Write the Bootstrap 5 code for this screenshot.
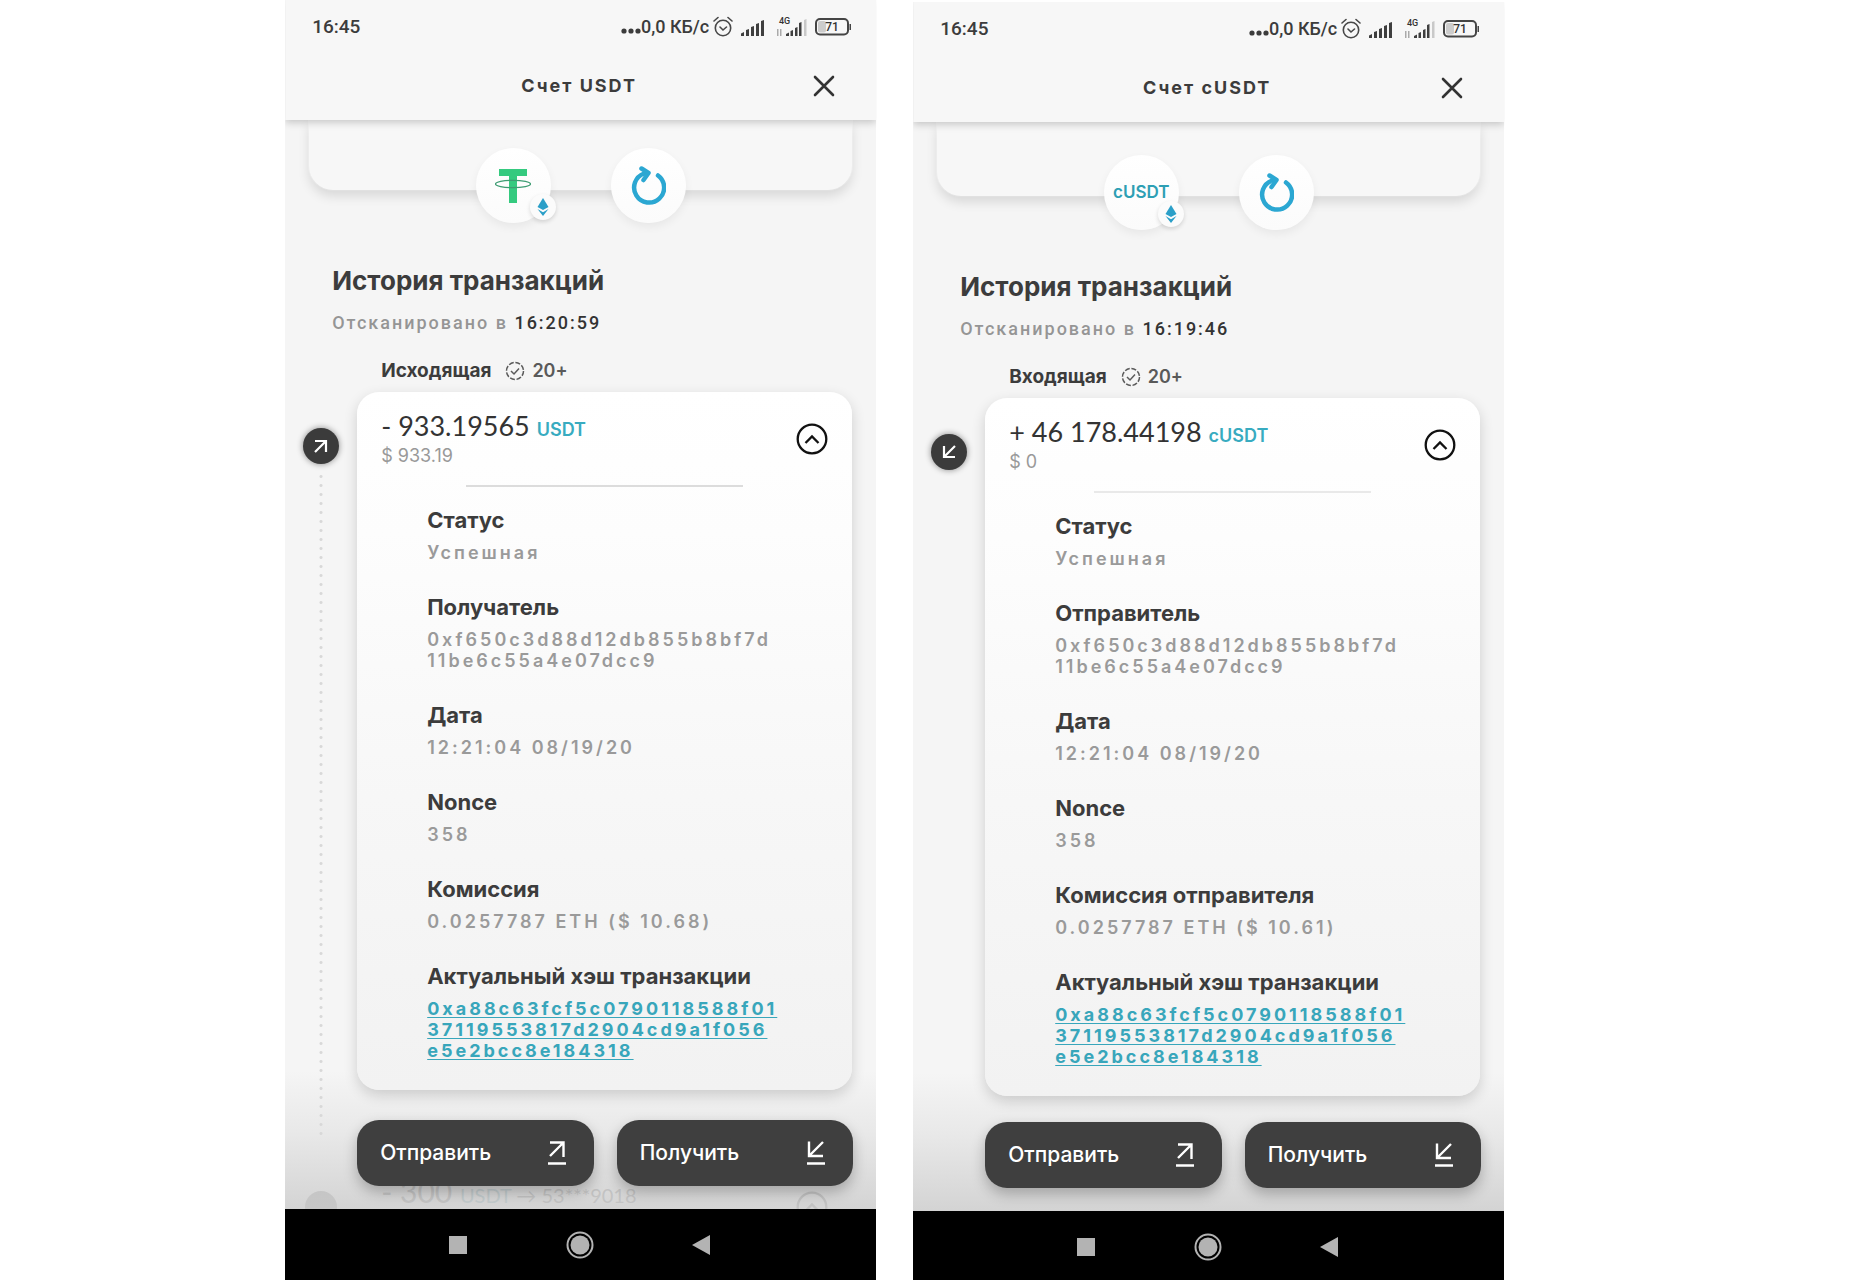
<!DOCTYPE html>
<html lang="ru">
<head>
<meta charset="utf-8">
<meta name="viewport" content="width=device-width, initial-scale=1">
<title>История транзакций</title>
<link href="https://cdn.jsdelivr.net/npm/bootstrap@5.3.0/dist/css/bootstrap.min.css" rel="stylesheet">
<style>
  body { font-family: Inter, "Noto Sans", sans-serif; color: #3c3c3c; background: #fff; }
  button { font-family: inherit; color: inherit; }
  .screens { padding: 0 19.3% 0 15.3%; gap: 37px; height: 100vh; overflow: hidden; }
  .phone { background: #f5f5f5; flex: 1 1 0; min-width: 0; height: 100vh; }
  .phone-lower { margin-top: 2px; }

  .topbar { background: #f7f7f7; box-shadow: 0 2px 8px rgba(0,0,0,.22); position: relative; z-index: 3; clip-path: inset(0 0 -14px 0); }
  .status-line { height: 54px; padding: 0 24px 0 27px; font: 500 19px/22px Roboto, sans-serif; }
  .status-line .speed { font-size: 18px; }
  .title-line { height: 66px; padding: 0 41px 2px 40px; }
  .title-line h1 { font-size: 18px; line-height: 24px; font-weight: 700; letter-spacing: 2px; }
  .plain-btn { background: none; border: 0; padding: 0; line-height: 0; }

  .content-area { position: relative; overflow: hidden; min-height: 0; }
  .account-stub { margin: 0 24px; height: 70px; padding-top: 28px; gap: 60px; border-radius: 0 0 24px 24px;
    background: #f7f7f7; box-shadow: 0 6px 12px rgba(0,0,0,.12), 0 0 0 1px #fafafa; }
  .phone-lower .account-stub { height: 74px; padding-top: 33px; }
  .round-btn { width: 75px; height: 75px; border-radius: 50%; border: 0; padding: 0; position: relative;
    background: linear-gradient(#fff, #fbfbfb); box-shadow: 0 4px 10px rgba(0,0,0,.06); }
  .round-btn .ticker { font-size: 17px; font-weight: 600; color: #2e9fb4; }
  .chain-dot { position: absolute; right: -5px; bottom: 3px; width: 26px; height: 26px; border-radius: 50%;
    background: #fbfbfb; box-shadow: 0 2px 4px rgba(0,0,0,.14); }

  .history-head { margin: 76px 24px 0 47px; }
  .history-head h2 { font-size: 26px; line-height: 30px; font-weight: 700; margin: 0 0 16px; }
  .scan-time { font: 500 18px/22px Roboto, sans-serif; letter-spacing: 2px; color: #959595; margin: 0; }
  .scan-time time { color: #333; }
  .kind-line { margin: 25px 24px 9px 96px; height: 24px; font-size: 19px; line-height: 24px; gap: 14px; }
  .kind-line .checks { gap: 7px; font-size: 18px; font-weight: 600; color: #5a5a5a; }

  .entry { padding-right: 24px; position: relative; z-index: 2; }
  .rail { width: 72px; flex: none; padding-top: 36px; position: relative; z-index: -1; }
  .rail-dot { width: 36px; height: 36px; border-radius: 50%; background: #3b3b3b; box-shadow: 0 0 6px rgba(0,0,0,.45); }
  .rail-line { width: 4px; margin-top: 8px; margin-bottom: -50px;
    background: radial-gradient(circle, #d8d8d8 1px, transparent 2px) 0 0 / 4px 9px repeat-y; }
  .tx-card { min-width: 0; border-radius: 22px; padding: 18px 24px 29px 24px;
    background: linear-gradient(#fff 0, #fdfdfd 20%, #f7f7f7 58%, #f2f2f2 100%);
    box-shadow: 0 5px 14px rgba(0,0,0,.16); }
  .sum { font: 400 27px/32px Lato, Inter, sans-serif; color: #333; margin-bottom: 3px; }
  .sum .unit { font: 600 18px/22px Inter, sans-serif; color: #38abc0; }
  .fiat { font-size: 18px; line-height: 22px; color: #999; }
  .split { width: 62%; height: 2px; margin: 18px auto 21px; background: #dcdcdc; border: 0; opacity: 1; }
  .phone-lower .split { background: #e9e9e9; }
  .facts { margin: 0; padding: 0 45px 0 46px; }
  .facts dt { font-size: 22px; line-height: 24px; font-weight: 700; margin-bottom: 10px; white-space: nowrap; }
  .facts dd { font-size: 18px; line-height: 21px; font-weight: 600; letter-spacing: 3px; color: #9a9a9a; margin: 0 0 32px; white-space: nowrap; }
  .facts dd:last-child { margin-bottom: 0; }
  .facts a { color: #38a6bb; font-weight: 700; text-decoration-thickness: 1px; text-underline-offset: 2px; }

  .next-entry { margin: 85px 24px 0 20px; color: #8d8d8d; }
  .next-entry .half-dot { width: 32px; height: 32px; border-radius: 50%; background: #9d9d9d; margin-right: 44px; }
  .next-entry .amount { font: 400 30px/32px Lato, Inter, sans-serif; }
  .next-entry .tail { font-size: 20px; }
  .next-entry .unit { color: #86b3bc; }

  .dock { position: absolute; left: 0; right: 0; bottom: 0; padding: 49px 23px 23px 72px; gap: 23px; z-index: 2; }
  .dock-shade { position: absolute; left: 0; right: 0; bottom: 0; height: 138px; z-index: 1;
    background: linear-gradient(rgba(236,236,236,0), rgba(222,222,222,.55) 45%, rgba(206,206,206,.86)); }
  .dock-btn { flex: 1 1 0; height: 66px; border: 0; border-radius: 22px; background: #3f3f3f; color: #fff; padding: 0 27px 0 23px;
    font-size: 21px; font-weight: 500; box-shadow: 0 6px 14px rgba(0,0,0,.25); }

  .navkeys { background: #000; height: 71px; padding: 0 165px 0 163px; flex: none; }
</style>
</head>
<body>
<svg width="0" height="0" class="position-absolute" aria-hidden="true">
  <symbol id="i-clock" viewBox="0 0 20 22"><g fill="none" stroke="#484848" stroke-width="1.6" stroke-linecap="round"><circle cx="10" cy="12" r="7.7"/><path d="M7 11l3 3 3.500-3M1 5l4-3.500M19 5l-4-3.500"/></g></symbol>
  <symbol id="i-signal" viewBox="0 0 23 17"><path fill="#3f3f3f" d="M0 17v-2.500L3 13v4zM5 17v-6l3-1v7zM10 17V8l3-1v10zM15 17V5l3-1v13zM20 17V2l3-1v16z"/></symbol>
  <symbol id="i-close" viewBox="0 0 22 22"><path d="M2 2l18 18M20 2L2 20" stroke="#333" stroke-width="2.600" stroke-linecap="round"/></symbol>
  <symbol id="i-tether" viewBox="0 0 38 34"><path fill="#35ca7f" d="M5 0h28v7H23v27h-8V7H5z"/><ellipse cx="19" cy="15" rx="17.500" ry="3.700" fill="none" stroke="#3d9c72" stroke-width="1.300"/></symbol>
  <symbol id="i-reload" viewBox="0 0 36 40"><g fill="none" stroke="#2ba7d2" stroke-width="4.500" stroke-linecap="round" stroke-linejoin="round"><path d="M28 9.500a15 15 0 1 1-14-2"/><path d="M11.500 2.500l7 4.500-5 7"/></g></symbol>
  <symbol id="i-eth" viewBox="0 0 12 18"><path fill="#2a9fc8" d="M6 0l5.500 9L6 12 .5 9z"/><path fill="#2a9fc8" d="M.5 11L6 14.200 11.500 11 6 18z"/></symbol>
  <symbol id="i-checks" viewBox="0 0 20 20"><g fill="none" stroke="#5b5b5b" stroke-width="1.500"><circle cx="10" cy="10" r="8.500" stroke-dasharray="5 1.700"/><path d="M6 10l3 3 5-5.500"/></g></symbol>
  <symbol id="i-up" viewBox="0 0 32 32"><g fill="none" stroke="#111" stroke-width="2.300"><circle cx="16" cy="16" r="14.300"/><path d="M9.500 20l6.500-6.500 6.500 6.500"/></g></symbol>
  <symbol id="i-out" viewBox="0 0 16 16"><path d="M2 3h11v11M12.500 3.500L2 14" fill="none" stroke="#fff" stroke-width="2.200"/></symbol>
  <symbol id="i-in" viewBox="0 0 16 16"><path d="M14 13H3V2M3.500 12.500L14 2" fill="none" stroke="#fff" stroke-width="2.200"/></symbol>
  <symbol id="i-send" viewBox="0 0 20 26"><path d="M3 2.500h13.500V17M16 3L3 16M1 23.500h18" fill="none" stroke="#fff" stroke-width="2.400"/></symbol>
  <symbol id="i-receive" viewBox="0 0 20 26"><path d="M17 16H3V1.500M3.500 15.500L17 2M1 23.500h18" fill="none" stroke="#fff" stroke-width="2.400"/></symbol>
</svg>

<div class="screens d-flex">

  <section class="phone d-flex flex-column">
    <header class="topbar">
      <div class="status-line d-flex align-items-center justify-content-between">
        <span>16:45</span>
        <span class="d-flex align-items-center">
          <svg width="20" height="6" viewBox="0 0 20 6" class="mt-2" aria-hidden="true"><g fill="#3c3c3c"><circle cx="3" cy="3" r="2.600"/><circle cx="10" cy="3" r="2.600"/><circle cx="17" cy="3" r="2.600"/></g></svg>
          <span class="speed me-1">0,0 КБ/с</span>
          <svg width="20" height="22" class="me-2"><use href="#i-clock"/></svg>
          <svg width="23" height="17" class="me-2"><use href="#i-signal"/></svg>
          <svg width="31" height="20" viewBox="0 0 31 20" class="ms-1 me-2"><text x="3" y="7" font-family="Roboto" font-size="9" font-weight="500" fill="#333">4G</text><path fill="#aaa" d="M1 12h1.500v7H1zM4 12h1.500v7H4z"/><path fill="#3f3f3f" d="M10 19v-2l3-1.500V19zM14.500 19v-5l2.500-1v6zM19 19v-8l2.500-1v9zM23 19V6l2.500-1v14z"/><path fill="#c9c9c9" d="M28 19V3l2.500-1v17z"/></svg>
          <svg width="37" height="18" viewBox="0 0 37 18"><rect x="1" y="1" width="32" height="15.500" rx="4" fill="none" stroke="#454545" stroke-width="2"/><rect x="3" y="3" width="8" height="11.500" rx="2" fill="#ccc"/><path fill="#454545" d="M34.500 6H36v6h-1.500z"/><text x="17" y="13" text-anchor="middle" font-family="Roboto" font-size="12" font-weight="500" fill="#333">71</text></svg>
        </span>
      </div>
      <div class="title-line d-flex align-items-center">
        <span class="px-2 ms-1"></span>
        <h1 class="flex-grow-1 text-center m-0">Счет USDT</h1>
        <button type="button" class="plain-btn" aria-label="Закрыть"><svg width="22" height="22"><use href="#i-close"/></svg></button>
      </div>
    </header>

    <main class="content-area flex-grow-1">
      <div class="account-stub d-flex justify-content-center">
        <button type="button" class="round-btn" aria-label="USDT">
          <svg width="38" height="34"><use href="#i-tether"/></svg>
          <span class="chain-dot d-flex align-items-center justify-content-center"><svg width="12" height="18"><use href="#i-eth"/></svg></span>
        </button>
        <button type="button" class="round-btn" aria-label="Обновить"><svg width="36" height="40"><use href="#i-reload"/></svg></button>
      </div>
      <div class="history-head">
        <h2>История транзакций</h2>
        <p class="scan-time">Отсканировано в <time>16:20:59</time></p>
      </div>
      <div class="kind-line d-flex align-items-center">
        <strong>Исходящая</strong>
        <span class="checks d-flex align-items-center"><svg width="20" height="20"><use href="#i-checks"/></svg>20+</span>
      </div>
      <div class="entry d-flex">
        <div class="rail d-flex flex-column align-items-center">
          <span class="rail-dot d-flex align-items-center justify-content-center"><svg width="16" height="16"><use href="#i-out"/></svg></span>
          <span class="rail-line flex-grow-1"></span>
        </div>
        <article class="tx-card flex-grow-1">
          <div class="d-flex align-items-center justify-content-between">
            <div>
              <div class="sum">- 933.19565 <span class="unit">USDT</span></div>
              <div class="fiat">$ 933.19</div>
            </div>
            <button type="button" class="plain-btn" aria-label="Свернуть"><svg width="32" height="32"><use href="#i-up"/></svg></button>
          </div>
          <hr class="split">
          <dl class="facts">
            <dt>Статус</dt><dd>Успешная</dd>
            <dt>Получатель</dt><dd>0xf650c3d88d12db855b8bf7d<br>11be6c55a4e07dcc9</dd>
            <dt>Дата</dt><dd>12:21:04 08/19/20</dd>
            <dt>Nonce</dt><dd>358</dd>
            <dt>Комиссия</dt><dd>0.0257787 ETH ($ 10.68)</dd>
            <dt>Актуальный хэш транзакции</dt>
            <dd><a href="#">0xa88c63fcf5c0790118588f01<br>37119553817d2904cd9a1f056<br>e5e2bcc8e184318</a></dd>
          </dl>
        </article>
      </div>
      <div class="next-entry d-flex align-items-start">
        <span class="half-dot mt-3"></span>
        <span class="amount flex-grow-1">- 300 <span class="tail"><span class="unit">USDT</span> → 53***9018</span></span>
        <svg width="32" height="32" class="me-4 mt-3 opacity-50"><use href="#i-up"/></svg>
      </div>
      <div class="dock-shade"></div>
      <div class="dock d-flex">
        <button type="button" class="dock-btn d-flex align-items-center justify-content-between">Отправить <svg width="20" height="26"><use href="#i-send"/></svg></button>
        <button type="button" class="dock-btn d-flex align-items-center justify-content-between">Получить <svg width="20" height="26"><use href="#i-receive"/></svg></button>
      </div>
    </main>

    <nav class="navkeys d-flex align-items-center justify-content-between">
      <button type="button" class="plain-btn" aria-label="Недавние"><svg width="20" height="28"><path fill="#b3b3b3" d="M1 5h18v18H1z"/></svg></button>
      <button type="button" class="plain-btn" aria-label="Домой"><svg width="28" height="28"><circle cx="14" cy="14" r="12.500" fill="none" stroke="#b3b3b3" stroke-width="2"/><circle cx="14" cy="14" r="9.500" fill="#b3b3b3"/></svg></button>
      <button type="button" class="plain-btn" aria-label="Назад"><svg width="20" height="28"><path fill="#b3b3b3" d="M1 14L19 4v20z"/></svg></button>
    </nav>
  </section>

  <section class="phone phone-lower d-flex flex-column">
    <header class="topbar">
      <div class="status-line d-flex align-items-center justify-content-between">
        <span>16:45</span>
        <span class="d-flex align-items-center">
          <svg width="20" height="6" viewBox="0 0 20 6" class="mt-2" aria-hidden="true"><g fill="#3c3c3c"><circle cx="3" cy="3" r="2.600"/><circle cx="10" cy="3" r="2.600"/><circle cx="17" cy="3" r="2.600"/></g></svg>
          <span class="speed me-1">0,0 КБ/с</span>
          <svg width="20" height="22" class="me-2"><use href="#i-clock"/></svg>
          <svg width="23" height="17" class="me-2"><use href="#i-signal"/></svg>
          <svg width="31" height="20" viewBox="0 0 31 20" class="ms-1 me-2"><text x="3" y="7" font-family="Roboto" font-size="9" font-weight="500" fill="#333">4G</text><path fill="#aaa" d="M1 12h1.500v7H1zM4 12h1.500v7H4z"/><path fill="#3f3f3f" d="M10 19v-2l3-1.500V19zM14.500 19v-5l2.500-1v6zM19 19v-8l2.500-1v9zM23 19V6l2.500-1v14z"/><path fill="#c9c9c9" d="M28 19V3l2.500-1v17z"/></svg>
          <svg width="37" height="18" viewBox="0 0 37 18"><rect x="1" y="1" width="32" height="15.500" rx="4" fill="none" stroke="#454545" stroke-width="2"/><rect x="3" y="3" width="8" height="11.500" rx="2" fill="#ccc"/><path fill="#454545" d="M34.500 6H36v6h-1.500z"/><text x="17" y="13" text-anchor="middle" font-family="Roboto" font-size="12" font-weight="500" fill="#333">71</text></svg>
        </span>
      </div>
      <div class="title-line d-flex align-items-center">
        <span class="px-2 ms-1"></span>
        <h1 class="flex-grow-1 text-center m-0">Счет cUSDT</h1>
        <button type="button" class="plain-btn" aria-label="Закрыть"><svg width="22" height="22"><use href="#i-close"/></svg></button>
      </div>
    </header>

    <main class="content-area flex-grow-1">
      <div class="account-stub d-flex justify-content-center">
        <button type="button" class="round-btn">
          <span class="ticker">cUSDT</span>
          <span class="chain-dot d-flex align-items-center justify-content-center"><svg width="12" height="18"><use href="#i-eth"/></svg></span>
        </button>
        <button type="button" class="round-btn" aria-label="Обновить"><svg width="36" height="40"><use href="#i-reload"/></svg></button>
      </div>
      <div class="history-head">
        <h2>История транзакций</h2>
        <p class="scan-time">Отсканировано в <time>16:19:46</time></p>
      </div>
      <div class="kind-line d-flex align-items-center">
        <strong>Входящая</strong>
        <span class="checks d-flex align-items-center"><svg width="20" height="20"><use href="#i-checks"/></svg>20+</span>
      </div>
      <div class="entry d-flex">
        <div class="rail d-flex flex-column align-items-center">
          <span class="rail-dot d-flex align-items-center justify-content-center"><svg width="16" height="16"><use href="#i-in"/></svg></span>
        </div>
        <article class="tx-card flex-grow-1">
          <div class="d-flex align-items-center justify-content-between">
            <div>
              <div class="sum">+ 46 178.44198 <span class="unit">cUSDT</span></div>
              <div class="fiat">$ 0</div>
            </div>
            <button type="button" class="plain-btn" aria-label="Свернуть"><svg width="32" height="32"><use href="#i-up"/></svg></button>
          </div>
          <hr class="split">
          <dl class="facts">
            <dt>Статус</dt><dd>Успешная</dd>
            <dt>Отправитель</dt><dd>0xf650c3d88d12db855b8bf7d<br>11be6c55a4e07dcc9</dd>
            <dt>Дата</dt><dd>12:21:04 08/19/20</dd>
            <dt>Nonce</dt><dd>358</dd>
            <dt>Комиссия отправителя</dt><dd>0.0257787 ETH ($ 10.61)</dd>
            <dt>Актуальный хэш транзакции</dt>
            <dd><a href="#">0xa88c63fcf5c0790118588f01<br>37119553817d2904cd9a1f056<br>e5e2bcc8e184318</a></dd>
          </dl>
        </article>
      </div>
      <div class="dock-shade"></div>
      <div class="dock d-flex">
        <button type="button" class="dock-btn d-flex align-items-center justify-content-between">Отправить <svg width="20" height="26"><use href="#i-send"/></svg></button>
        <button type="button" class="dock-btn d-flex align-items-center justify-content-between">Получить <svg width="20" height="26"><use href="#i-receive"/></svg></button>
      </div>
    </main>

    <nav class="navkeys d-flex align-items-center justify-content-between">
      <button type="button" class="plain-btn" aria-label="Недавние"><svg width="20" height="28"><path fill="#b3b3b3" d="M1 5h18v18H1z"/></svg></button>
      <button type="button" class="plain-btn" aria-label="Домой"><svg width="28" height="28"><circle cx="14" cy="14" r="12.500" fill="none" stroke="#b3b3b3" stroke-width="2"/><circle cx="14" cy="14" r="9.500" fill="#b3b3b3"/></svg></button>
      <button type="button" class="plain-btn" aria-label="Назад"><svg width="20" height="28"><path fill="#b3b3b3" d="M1 14L19 4v20z"/></svg></button>
    </nav>
  </section>

</div>
<script src="https://cdn.jsdelivr.net/npm/bootstrap@5.3.0/dist/js/bootstrap.bundle.min.js"></script>
</body>
</html>
